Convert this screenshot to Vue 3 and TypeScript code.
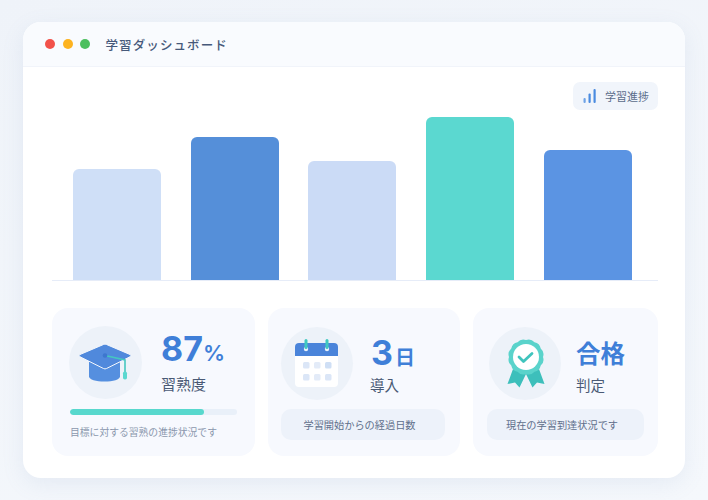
<script setup lang="ts">
import { computed } from "vue";

interface Bar {
    height: number;
    color: string;
}

const bars: Bar[] = [
    { height: 111, color: "#cfdff7" },
    { height: 143, color: "#558fd9" },
    { height: 119, color: "#cbdbf6" },
    { height: 163, color: "#5bd8d0" },
    { height: 130, color: "#5b94e3" },
];

// rosette edge for the badge icon
const rosette = computed(() => {
    const cx = 37;
    const cy = 30;
    const n = 12;
    let d = "";
    for (let i = 0; i < n; i++) {
        const a0 = (i / n) * Math.PI * 2;
        const a1 = ((i + 0.5) / n) * Math.PI * 2;
        const a2 = ((i + 1) / n) * Math.PI * 2;
        const p = (a: number, r: number) =>
            `${(cx + Math.cos(a) * r).toFixed(2)} ${(cy + Math.sin(a) * r).toFixed(2)}`;
        if (i === 0) d += `M${p(a0, 17)}`;
        d += `Q${p(a1, 19.4)} ${p(a2, 17)}`;
    }
    return d + "Z";
});
</script>

<template>
    <div class="page">
        <div class="window">
            <header class="titlebar">
                <span class="dot red"></span>
                <span class="dot amber"></span>
                <span class="dot green"></span>
                <span class="title">学習ダッシュボード</span>
            </header>

            <main class="content">
                <section class="chart">
                    <div class="legend">
                        <svg width="13" height="16" viewBox="0 0 13 16">
                            <rect x="0.500" y="10" width="2.200" height="5" rx="1" fill="#6fa3e6" />
                            <rect x="5.500" y="5.500" width="2.200" height="9.500" rx="1" fill="#4a8be0" />
                            <rect x="10.500" y="1" width="2.200" height="14" rx="1" fill="#4a8be0" />
                        </svg>
                        <span>学習進捗</span>
                    </div>
                    <div
                        v-for="(bar, i) in bars"
                        :key="i"
                        class="bar"
                        :style="{ height: bar.height + 'px', background: bar.color }"
                    ></div>
                </section>

                <section class="cards">
                    <article class="card first">
                        <div class="head">
                            <div class="circle">
                                <svg width="73" height="73" viewBox="0 0 73 73">
                                    <path d="M20 36h31v14.500c0 3-7 5-15.500 5S20 53.500 20 50.500Z" fill="#558fdf" />
                                    <path d="M34.500 18.500a3 3 0 0 1 3 0L61 28.500q1.800 1.200 0 2.300L37.500 42.500a3 3 0 0 1-3 0L11 30.800q-1.800-1.100 0-2.300Z" fill="#5089dc" stroke="#f4f8fd" stroke-width="1" />
                                    <path d="M36 29.500L56 34V46" fill="none" stroke="#45c6bf" stroke-width="1.600" />
                                    <circle cx="36" cy="29.500" r="2.300" fill="#3d77cf" />
                                    <rect x="54" y="45.500" width="4" height="8" rx="1.800" fill="#5bd8d0" />
                                </svg>
                            </div>
                            <div class="stat">
                                <div class="value"><span class="num">87</span><span class="unit pct">%</span></div>
                                <div class="label">習熟度</div>
                            </div>
                        </div>
                        <div class="track"><div class="fill" :style="{ width: '80%' }"></div></div>
                        <p class="desc">目標に対する習熟の進捗状況です</p>
                    </article>

                    <article class="card second">
                        <div class="head">
                            <div class="circle">
                                <svg width="72" height="73" viewBox="0 0 72 73">
                                    <rect x="14" y="16" width="43" height="44" rx="4" fill="#fff" />
                                    <path d="M14 29V20a4 4 0 0 1 4-4h35a4 4 0 0 1 4 4v9Z" fill="#4a84da" />
                                    <circle cx="25" cy="22" r="2.200" fill="#eaf1fb" />
                                    <circle cx="46" cy="22" r="2.200" fill="#eaf1fb" />
                                    <rect x="23.500" y="12" width="3" height="10" rx="1.500" fill="#3fc9c0" />
                                    <rect x="44.500" y="12" width="3" height="10" rx="1.500" fill="#3fc9c0" />
                                    <rect x="22" y="35" width="6.500" height="6.500" rx="1.500" fill="#dbe6f7" />
                                    <rect x="33" y="35" width="6.500" height="6.500" rx="1.500" fill="#e3ebf8" />
                                    <rect x="44" y="35" width="6.500" height="6.500" rx="1.500" fill="#cfdff5" />
                                    <rect x="22" y="47" width="6.500" height="6.500" rx="1.500" fill="#dbe6f7" />
                                    <rect x="33" y="47" width="6.500" height="6.500" rx="1.500" fill="#e3ebf8" />
                                    <rect x="44" y="47" width="6.500" height="6.500" rx="1.500" fill="#dbe6f7" />
                                </svg>
                            </div>
                            <div class="stat">
                                <div class="value"><span class="num">3</span><span class="unit day">日</span></div>
                                <div class="label small">導入</div>
                            </div>
                        </div>
                        <div class="note">学習開始からの経過日数</div>
                    </article>

                    <article class="card third">
                        <div class="head">
                            <div class="circle">
                                <svg width="72" height="73" viewBox="0 0 72 73">
                                    <path d="M24 42L18.500 57L26 55.500L30.500 60.500L37 47Z" fill="#3dbfbb" />
                                    <path d="M50 42L55.500 57L48 55.500L43.500 60.500L37 47Z" fill="#3dbfbb" />
                                    <path :d="rosette" fill="#5ad3cb" />
                                    <circle cx="37" cy="30" r="13" fill="#fff" />
                                    <path d="M30 30L34.500 34.500L43 26.500" fill="none" stroke="#3fc4bd" stroke-width="2.800" stroke-linecap="round" stroke-linejoin="round" />
                                </svg>
                            </div>
                            <div class="stat">
                                <div class="value text">合格</div>
                                <div class="label small">判定</div>
                            </div>
                        </div>
                        <div class="note">現在の学習到達状況です</div>
                    </article>
                </section>
            </main>
        </div>
    </div>
</template>

<style>
html,
body {
    margin: 0;
    padding: 0;
}
</style>

<style scoped>
.page {
    width: 708px;
    height: 500px;
    box-sizing: border-box;
    padding: 22px 23px;
    background: linear-gradient(160deg, #eff3f9 0%, #f5f8fc 100%);
    font-family: "Noto Sans CJK JP", "Inter", sans-serif;
    overflow: hidden;
}

.window {
    height: 456px;
    background: #fff;
    border-radius: 18px;
    box-shadow: 0 6px 22px rgba(120, 145, 190, 0.12);
    overflow: hidden;
}

.titlebar {
    display: flex;
    align-items: center;
    height: 44px;
    padding-left: 22px;
    background: #f9fbfe;
    border-bottom: 1px solid #f1f4fa;
}

.dot {
    width: 10px;
    height: 10px;
    border-radius: 50%;
    margin-right: 7.500px;
}
.red {
    background: #f2524a;
}
.amber {
    background: #fdb320;
}
.green {
    background: #4cbf5e;
}

.title {
    margin-left: 8px;
    font-size: 12.500px;
    font-weight: 500;
    letter-spacing: 1.100px;
    color: #46597a;
}

.content {
    padding: 14px 27px 0 29px;
}

.chart {
    position: relative;
    display: flex;
    align-items: flex-end;
    justify-content: space-between;
    height: 199px;
    padding: 0 26.500px 0 21px;
    border-bottom: 1.500px solid #e6ecf8;
}

.legend {
    position: absolute;
    top: 1px;
    right: 0;
    display: flex;
    align-items: center;
    gap: 9px;
    height: 28px;
    padding: 0 9px 0 10px;
    background: #f1f5fb;
    border-radius: 7px;
    font-size: 11px;
    color: #5a6c8a;
}

.bar {
    width: 88px;
    border-radius: 6px 6px 0 0;
}

.cards {
    display: grid;
    grid-template-columns: 203px 192px 185px;
    gap: 13px;
    margin-top: 27px;
}

.card {
    height: 148px;
    box-sizing: border-box;
    background: #f7f9fe;
    border-radius: 16px;
    padding-top: 18px;
}
.second,
.third {
    padding-top: 19px;
}

.head {
    display: flex;
    align-items: flex-start;
}

.first .head {
    padding-left: 17px;
}
.second .head {
    padding-left: 13px;
}
.third .head {
    padding-left: 16px;
}

.circle {
    width: 72px;
    height: 73px;
    flex: none;
    background: #edf2f9;
    border-radius: 50%;
}
.first .circle {
    width: 73px;
}
.circle svg {
    display: block;
}

.stat {
    margin-top: 5px;
}
.first .stat {
    margin-left: 19px;
    margin-top: 2px;
}
.second .stat {
    margin-left: 17px;
}
.third .stat {
    margin-left: 15px;
}

.value {
    display: flex;
    align-items: baseline;
    height: 42px;
    line-height: 42px;
    font-family: "Inter", "Noto Sans CJK JP", sans-serif;
    font-weight: 700;
    color: #3f7fd8;
}
.num {
    font-size: 34px;
}
.unit.pct {
    font-size: 22px;
    font-weight: 600;
    margin-left: 0;
}
.second .num {
    margin-left: 1px;
}
.unit.day {
    font-family: "Noto Sans CJK JP", sans-serif;
    font-size: 20px;
    margin-left: 2px;
}
.value.text {
    font-family: "Noto Sans CJK JP", sans-serif;
    font-size: 24.500px;
}

.label {
    margin-top: 3px;
    font-size: 15px;
    line-height: 22px;
    color: #4a5a75;
}
.label.small {
    margin-top: 0;
    font-size: 14.500px;
}

.track {
    height: 6px;
    margin: 10px 18px 0;
    background: #e9f0f9;
    border-radius: 3px;
    overflow: hidden;
}
.fill {
    height: 100%;
    background: #58d8cd;
    border-radius: 3px;
}

.desc {
    margin: 9px 18px 0;
    font-size: 9.800px;
    line-height: 16px;
    white-space: nowrap;
    color: #8a97ad;
}

.note {
    display: flex;
    align-items: center;
    justify-content: center;
    height: 31px;
    box-sizing: border-box;
    padding-right: 7px;
    margin-top: 9px;
    background: #edf2fa;
    border-radius: 10px;
    font-size: 10.200px;
    color: #5f6f8b;
}
.second .note {
    margin-left: 13px;
    margin-right: 15px;
}
.third .note {
    margin-left: 14px;
    margin-right: 14px;
}
</style>
